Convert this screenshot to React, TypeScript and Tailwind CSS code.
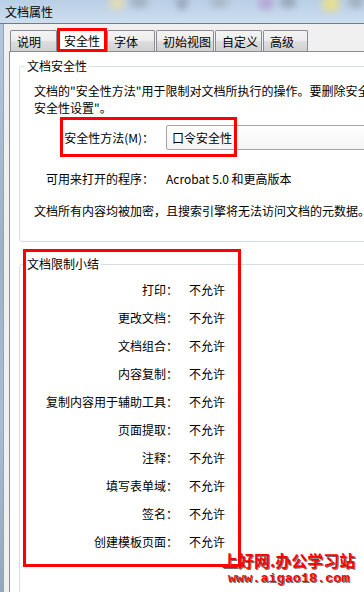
import React from "react";

const rows = [
  "打印：",
  "更改文档：",
  "文档组合：",
  "内容复制：",
  "复制内容用于辅助工具：",
  "页面提取：",
  "注释：",
  "填写表单域：",
  "签名：",
  "创建模板页面：",
];

const tabBg =
  "bg-[linear-gradient(to_bottom,#f4f4f4_0%,#ececec_50%,#dedede_50%,#d0d0d0_100%)]";

function Tab({ label, w }: { label: string; w: string }) {
  return (
    <div
      className={`${w} shrink-0 h-[21px] ${tabBg} border border-b-0 border-[#898c95] rounded-t-[2px] flex items-center pl-[6px] pt-[1px] leading-[14px] whitespace-nowrap`}
    >
      {label}
    </div>
  );
}

export default function App() {
  return (
    <div className="relative w-[364px] h-[592px] overflow-hidden bg-[#f0f0f0] text-[12px] text-black font-['Noto_Sans_CJK_SC','Noto_Sans',sans-serif]">
      {/* title bar */}
      <div className="relative h-[23px] bg-[linear-gradient(to_bottom,#b9cfe6,#cddeef)] overflow-hidden">
        <div className="absolute left-[108px] top-[-4px] w-[18px] h-[14px] rounded-full bg-[#e6dcb0] blur-[3px] opacity-80" />
        <div className="absolute left-[130px] top-[-4px] w-[18px] h-[12px] rounded-full bg-[#9aa6b4] blur-[3px] opacity-70" />
        <div className="absolute left-[176px] top-[-4px] w-[12px] h-[14px] rounded-full bg-[#8f9aa8] blur-[3px] opacity-70" />
        <div className="absolute left-[210px] top-[-4px] w-[18px] h-[12px] rounded-full bg-[#a5afbc] blur-[3px] opacity-70" />
        <div className="absolute left-[258px] top-[-4px] w-[16px] h-[14px] rounded-full bg-[#b79fd6] blur-[3px] opacity-80" />
        <div className="absolute left-[280px] top-[-4px] w-[16px] h-[12px] rounded-full bg-[#8d98a8] blur-[3px] opacity-70" />
        <div className="absolute left-[322px] top-[-4px] w-[18px] h-[16px] rounded-full bg-[#e8df8a] blur-[3px] opacity-90" />
        <div className="absolute left-[348px] top-[-4px] w-[16px] h-[12px] rounded-full bg-[#9aa4b2] blur-[3px] opacity-70" />
        <div className="relative pl-[5px] leading-[24px] text-[12px]">文档属性</div>
      </div>
      <div className="h-px bg-[#6f7b88]" />

      {/* body */}
      <div className="flex h-[568px]">
        <div className="w-[3px] shrink-0 bg-[linear-gradient(to_bottom,#b3c7dc,#9cb1c8_40%,#a9bdd2_70%,#93a8bf)]" />
        <div className="w-px shrink-0 bg-[#9aa3ad]" />
        <div className="flex-1 min-w-0 flex flex-col pl-[5px] pt-[6px]">
          {/* tabs */}
          <div className="relative z-10 flex items-end h-[21px] pl-[1px]">
            <Tab label="说明" w="w-[47px]" />
            <div className="w-[50px] shrink-0 h-[24px] -mb-px bg-white border border-b-0 border-[#898c95] rounded-t-[2px] flex items-center justify-center leading-[14px]">
              安全性
            </div>
            <Tab label="字体" w="w-[48px]" />
            <div className="w-px shrink-0" />
            <Tab label="初始视图" w="w-[58px]" />
            <div className="w-px shrink-0" />
            <Tab label="自定义" w="w-[47px]" />
            <div className="w-px shrink-0" />
            <Tab label="高级" w="w-[45px]" />
          </div>

          {/* panel */}
          <div className="flex-1 w-[420px] shrink-0 bg-white border border-[#898c95] pl-[9px] pt-[7px]">
            <fieldset className="border border-[#d5dfe5] rounded-[3px] w-[400px]">
              <legend className="ml-[5px] px-[2px] leading-[14px]">文档安全性</legend>
              <div className="pl-[14px] pb-[22px]">
                <div className="mt-[9px] leading-[17px] whitespace-nowrap">
                  <div>文档的"安全性方法"用于限制对文档所执行的操作。要删除安全性限制，请将安全性方法设置为"无</div>
                  <div>安全性设置"。</div>
                </div>
                <div className="mt-[9px] flex items-center h-[25px]">
                  <div className="w-[120px] shrink-0 text-right whitespace-nowrap">安全性方法(M)：</div>
                  <div className="ml-[12px] w-[260px] shrink-0 h-[25px] border border-[#a3a6ad] rounded-[2px] bg-[linear-gradient(to_bottom,#ffffff,#f4f4f4)] flex items-center pl-[5px]">
                    口令安全性
                  </div>
                </div>
                <div className="mt-[20px] flex items-center h-[17px]">
                  <div className="w-[120px] shrink-0 text-right whitespace-nowrap">可用来打开的程序：</div>
                  <div className="ml-[12px] whitespace-nowrap">Acrobat 5.0 和更高版本</div>
                </div>
                <div className="mt-[15px] leading-[17px] whitespace-nowrap">
                  文档所有内容均被加密，且搜索引擎将无法访问文档的元数据。
                </div>
              </div>
            </fieldset>

            <fieldset className="mt-[15px] border border-[#d5dfe5] rounded-[3px] w-[400px]">
              <legend className="ml-[5px] px-[2px] leading-[14px]">文档限制小结</legend>
              <div className="pl-[14px] pt-[5px] pb-[60px]">
                {rows.map((r) => (
                  <div key={r} className="flex items-center h-[28px]">
                    <div className="w-[144px] shrink-0 text-right whitespace-nowrap">{r}</div>
                    <div className="ml-[11px] whitespace-nowrap">不允许</div>
                  </div>
                ))}
              </div>
            </fieldset>
          </div>
        </div>
      </div>

      {/* red annotation boxes */}
      <div className="absolute left-[57px] top-[28px] w-[50px] h-[24px] border-[3px] border-[#ff0000] z-20" />
      <div className="absolute left-[60px] top-[117px] w-[177px] h-[40px] border-[3px] border-[#ff0000] z-20" />
      <div className="absolute left-[23px] top-[249px] w-[218px] h-[318px] border-[3px] border-[#ff0000] z-20" />

      {/* watermark */}
      <div className="absolute left-[222px] top-[552px] z-30 text-[#ff0000] font-bold text-[16px] leading-[17px] whitespace-nowrap [text-shadow:1px_1px_0_#707070]">
        上好网.办公学习站
      </div>
      <div className="absolute left-[228px] top-[571px] z-30 text-[#ff0000] font-bold text-[13.5px] leading-[15px] whitespace-nowrap font-['Liberation_Mono',monospace] [text-shadow:1px_1px_0_#707070]">
        www.aigao18.com
      </div>
    </div>
  );
}
